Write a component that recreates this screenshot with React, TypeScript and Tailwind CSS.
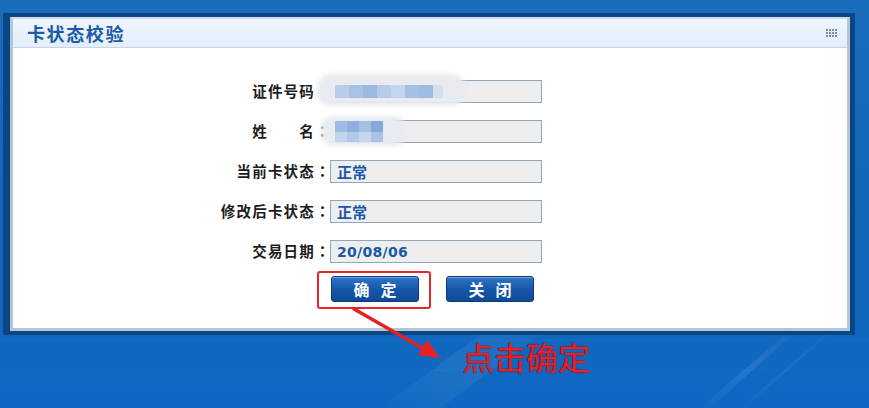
import React from "react";

const cjk = { fontFamily: '"Noto Sans CJK SC", "Noto Sans", sans-serif' };
const cjkTc = { fontFamily: '"Noto Sans CJK TC", "Noto Sans CJK SC", sans-serif' };

function Field({ label, value, mono }: { label: string; value?: string; mono?: boolean }) {
  return (
    <div className="flex items-center h-[23px]">
      <div className="w-[317px] flex justify-end items-center text-[14.5px] font-bold text-[#1c1c1c] leading-none" style={cjk}>
        <span className="tracking-[1.2px]">{label}</span>
        <span className="w-[15px] text-center" style={cjkTc}>：</span>
      </div>
      <div className="w-[212px] h-[23px] bg-[#eeeeee] border border-[#8ea6be] flex items-center pl-[6px]">
        {value && (
          <span
            className={
              mono
                ? "text-[14px] font-bold text-[#1a58a6] tracking-[0.3px] leading-none"
                : "text-[15px] font-bold text-[#1a58a6] leading-none"
            }
            style={mono ? { fontFamily: '"DejaVu Sans", Verdana, sans-serif' } : cjk}
          >
            {value}
          </span>
        )}
      </div>
    </div>
  );
}

function Btn({ a, b }: { a: string; b: string }) {
  return (
    <div className="w-[88px] h-[26px] rounded-[3px] border border-[#0b3a7c] bg-gradient-to-b from-[#2f74c8] via-[#1657aa] to-[#0e4b98] shadow-[inset_0_1px_0_rgba(255,255,255,0.35)] flex items-center justify-center gap-[11px] text-white text-[16px] font-bold leading-none" style={cjk}>
      <span>{a}</span>
      <span>{b}</span>
    </div>
  );
}

export default function App() {
  return (
    <div className="relative w-[869px] h-[408px] overflow-hidden bg-gradient-to-b from-[#1a6cbd] via-[#1266b9] to-[#0e68c2]">
      <svg className="absolute inset-0" width="869" height="408" viewBox="0 0 869 408">
        <defs>
          <linearGradient id="st" x1="0" y1="1" x2="1" y2="0">
            <stop offset="0" stopColor="#ffffff" stopOpacity="0" />
            <stop offset="0.5" stopColor="#9fd0ff" stopOpacity="0.3" />
            <stop offset="1" stopColor="#ffffff" stopOpacity="0" />
          </linearGradient>
        </defs>
        <path d="M380 408 L500 320 L560 320 L440 408 Z" fill="url(#st)" opacity="0.35" />
        <path d="M700 408 L790 330 L798 330 L710 408 Z" fill="url(#st)" opacity="0.45" />
        <path d="M740 408 L830 330 L834 330 L745 408 Z" fill="url(#st)" opacity="0.3" />
        <path d="M0 340 L869 340" stroke="#ffffff" strokeOpacity="0.04" />
        <path d="M0 370 L869 370" stroke="#ffffff" strokeOpacity="0.04" />
      </svg>

      <div className="relative pt-[13px] pl-[3px]">
        <div className="w-[852px] h-[322px] bg-[#0a4684] pl-[7px] pt-[4px]">
          <div className="w-[840px] h-[314px] bg-white border-t-2 border-l-[3px] border-r-[3px] border-b-[3px] border-t-[#cfdbe7] border-l-[#b4c5d6] border-r-[#b4c5d6] border-b-[#b4c5d6] flex flex-col">
            <div className="h-[29px] shrink-0 bg-gradient-to-b from-[#eef5fd] to-[#e3eef9] border-b border-[#c3d5e7] flex items-center justify-between pl-[14px] pr-[10px]">
              <span className="text-[18px] font-bold text-[#1a5aa8] tracking-[1.6px] leading-none" style={cjk}>
                卡状态校验
              </span>
              <div className="grid grid-cols-4 gap-[1px]">
                {Array.from({ length: 12 }).map((_, i) => (
                  <span key={i} className="w-[2px] h-[2px] bg-[#7a8ea6]" />
                ))}
              </div>
            </div>

            <div className="flex flex-col pt-[32px] gap-[17px]">
              <div className="relative">
                <Field label="证件号码" />
                <div className="absolute left-[304px] top-[-6px] w-[148px] h-[32px] rounded-[14px] bg-[#e8ebef] blur-[2px]" />
                <div className="absolute left-[322px] top-[5px] h-[13px] flex">
                  <span className="w-[14px] bg-[#b9cdea]" />
                  <span className="w-[14px] bg-[#a8c2e6]" />
                  <span className="w-[14px] bg-[#9ab9e2]" />
                  <span className="w-[14px] bg-[#b6cbe9]" />
                  <span className="w-[14px] bg-[#c3d4ec]" />
                  <span className="w-[14px] bg-[#a5bfe5]" />
                  <span className="w-[14px] bg-[#9dbbe3]" />
                  <span className="w-[10px] bg-[#d6dfec]" />
                </div>
              </div>
              <div className="relative">
                <Field label="姓　　名" />
                <div className="absolute left-[308px] top-[-4px] w-[84px] h-[30px] rounded-[12px] bg-[#e8ebef] blur-[2px]" />
                <div className="absolute left-[322px] top-[1px] grid grid-cols-4 w-[48px] h-[21px]">
                  <span className="bg-[#9fbbe4]" />
                  <span className="bg-[#8fb0df]" />
                  <span className="bg-[#a6c0e6]" />
                  <span className="bg-[#86a9dc]" />
                  <span className="bg-[#c3d4ee]" />
                  <span className="bg-[#b3c8ea]" />
                  <span className="bg-[#c6d6ef]" />
                  <span className="bg-[#a9c2e7]" />
                </div>
              </div>
              <Field label="当前卡状态" value="正常" />
              <Field label="修改后卡状态" value="正常" />
              <Field label="交易日期" value="20/08/06" mono />
              <div className="flex pl-[318px] gap-[27px] -mt-[4px]">
                <Btn a="确" b="定" />
                <Btn a="关" b="闭" />
              </div>
            </div>
          </div>
        </div>
      </div>

      <div className="absolute left-[317px] top-[271px] w-[114px] h-[38px] border-2 border-[#e8262a] rounded-[3px]" />
      <svg className="absolute inset-0 pointer-events-none" width="869" height="408" viewBox="0 0 869 408">
        <path d="M354 309 L424 349" stroke="#e8211f" strokeWidth="3.5" strokeLinecap="round" />
        <path d="M440 358 L418 355 L427 340 Z" fill="#e8211f" />
      </svg>
      <div
        className="absolute left-[462px] top-[340px] text-[32px] leading-none text-[#e8202a]"
        style={{ ...cjk, textShadow: "0 0 1px #6b0a0a, 0 0 1px #6b0a0a" }}
      >
        点击确定
      </div>
    </div>
  );
}
